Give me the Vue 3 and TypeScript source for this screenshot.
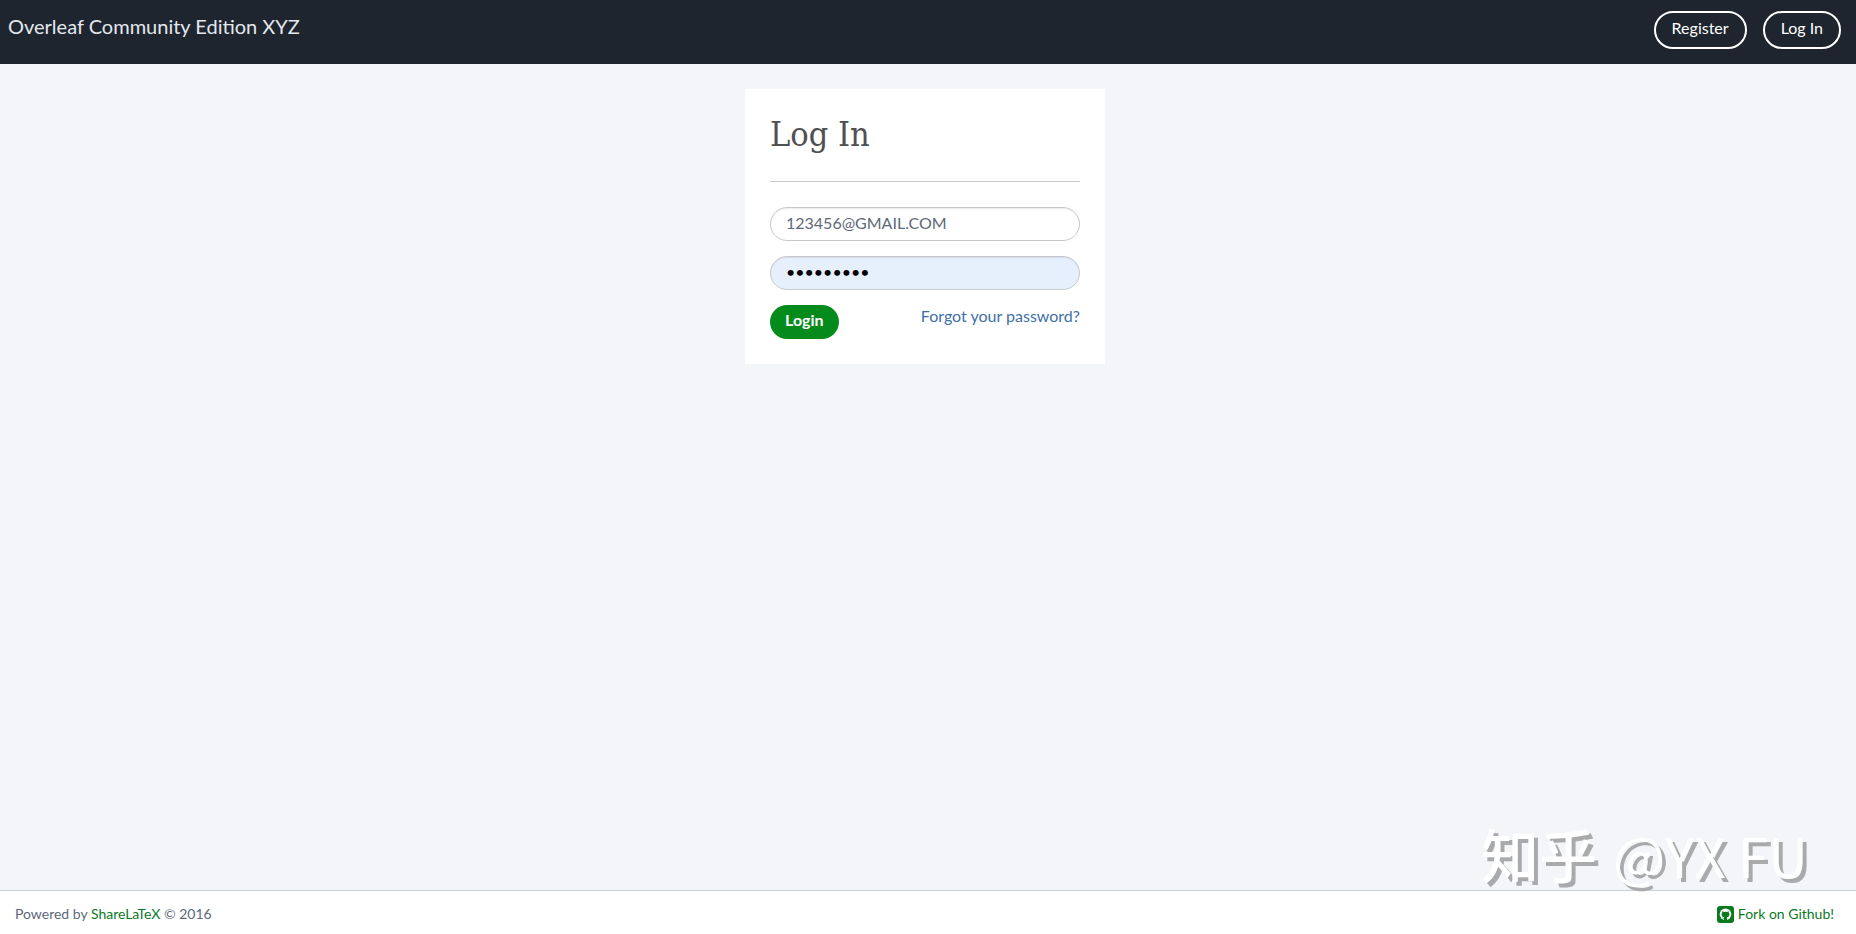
<script setup lang="ts">
import { ref } from 'vue'

const email = ref<string>('123456@GMAIL.COM')
const password = ref<string>('overleaf1')
</script>

<template>
  <div class="page">
    <header class="navbar">
      <a class="brand" href="#">Overleaf Community Edition XYZ</a>
      <nav class="nav-links">
        <a class="nav-pill" href="#">Register</a>
        <a class="nav-pill" href="#">Log In</a>
      </nav>
    </header>

    <main class="content">
      <section class="card">
        <h1 class="title">Log In</h1>
        <form class="form" @submit.prevent>
          <input v-model="email" class="field" type="email" aria-label="Email" />
          <input v-model="password" class="field filled" type="password" aria-label="Password" />
          <div class="actions">
            <button class="submit" type="submit">Login</button>
            <a class="forgot" href="#">Forgot your password?</a>
          </div>
        </form>
      </section>
    </main>

    <footer class="footer">
      <p class="powered">Powered by <a href="#">ShareLaTeX</a> © 2016</p>
      <a class="fork" href="#">
        <svg class="github" viewBox="0 0 17 17" aria-hidden="true">
          <rect width="17" height="17" rx="3" fill="#0a7a1f" />
          <circle cx="8.500" cy="8.300" r="5.800" fill="#fff" />
          <path
            d="M6.900 14.500v-2.100c-.9.200-1.500-.1-1.900-.9l.9.200c.3.300.6.300 1 .2.100-.4.200-.6.400-.8-1.700-.2-2.700-1-2.700-2.700 0-.7.200-1.200.6-1.600-.1-.5-.1-1 .1-1.500.6 0 1.100.300 1.600.6a6 6 0 0 1 3.200 0c.5-.3 1-.6 1.600-.6.2.5.2 1 .1 1.500.4.4.6.9.6 1.600 0 1.700-1 2.500-2.700 2.700.3.300.4.600.4 1.100v2.300z"
            fill="#0a7a1f"
          />
        </svg>
        <span>Fork on Github!</span>
      </a>
      <div class="watermark"><span class="mark-logo">知乎</span><span>@YX FU</span></div>
    </footer>
  </div>
</template>

<style>
body {
  margin: 0;
}
</style>

<style scoped>
.page {
  display: flex;
  flex-direction: column;
  min-height: 100vh;
  background: #f4f5f8;
  color: #5d6879;
  font-family: Lato, "Liberation Sans", sans-serif;
  font-size: 16px;
  line-height: 24px;
}

a {
  text-decoration: none;
}

.navbar {
  display: flex;
  align-items: flex-start;
  justify-content: space-between;
  box-sizing: border-box;
  height: 64px;
  padding: 11px 15px 0 8px;
  background: #1e252f;
}

.brand {
  padding-top: 3px;
  color: #e4e8ee;
  font-size: 20px;
}

.nav-links {
  display: flex;
  gap: 16px;
}

.nav-pill {
  padding: 3px 16px 7px;
  border: 2px solid #fff;
  border-radius: 20px;
  color: #fff;
}

.content {
  flex: 1;
  padding: 25px 6px 25px 0;
}

.card {
  box-sizing: border-box;
  width: 360px;
  max-width: 100%;
  margin: 0 auto;
  padding: 25px;
  background: #fff;
}

.title {
  margin: 0 0 25px;
  padding-bottom: 26px;
  border-bottom: 1px solid #c8c9ca;
  color: #505050;
  font-family: "DejaVu Serif Condensed", "DejaVu Serif", serif;
  font-size: 34px;
  font-weight: 400;
  line-height: 41px;
}

.form {
  display: flex;
  flex-direction: column;
  gap: 15px;
}

.field {
  box-sizing: border-box;
  width: 100%;
  height: 34px;
  padding: 0 15px 3px;
  border: 1px solid #c8c9cc;
  border-radius: 17px;
  background: #fff;
  box-shadow: inset 0 1px 1px rgba(0, 0, 0, 0.08);
  color: #5d6879;
  font: inherit;
}

.filled {
  background: #e6f0fd;
  color: #000;
}

.actions {
  display: flex;
  align-items: flex-start;
  justify-content: space-between;
}

.submit {
  height: 34px;
  padding: 0 15px 4px;
  border: 0;
  border-radius: 17px;
  background: #048b1c;
  color: #fff;
  font: inherit;
  font-weight: 700;
}

.forgot {
  line-height: 22px;
  color: #3f70a7;
}

.footer {
  position: relative;
  display: flex;
  align-items: center;
  justify-content: space-between;
  box-sizing: border-box;
  height: 44px;
  padding: 3px 22px 0 15px;
  border-top: 1px solid #cdd0d3;
  background: #fff;
  font-size: 14px;
}

.powered {
  margin: 0;
}

.footer a {
  color: #0a7a1f;
}

.fork {
  display: flex;
  align-items: center;
  gap: 4px;
}

.github {
  width: 17px;
  height: 17px;
}

.watermark {
  position: absolute;
  right: 48px;
  bottom: 48px;
  display: flex;
  align-items: baseline;
  gap: 16px;
  color: #fff;
  font-family: "Noto Sans CJK SC", sans-serif;
  font-size: 55px;
  line-height: 64px;
  text-shadow: 4px 4px 0 #a9aaac;
  white-space: nowrap;
  pointer-events: none;
}

.mark-logo {
  font-size: 58px;
  font-weight: 500;
}
</style>
